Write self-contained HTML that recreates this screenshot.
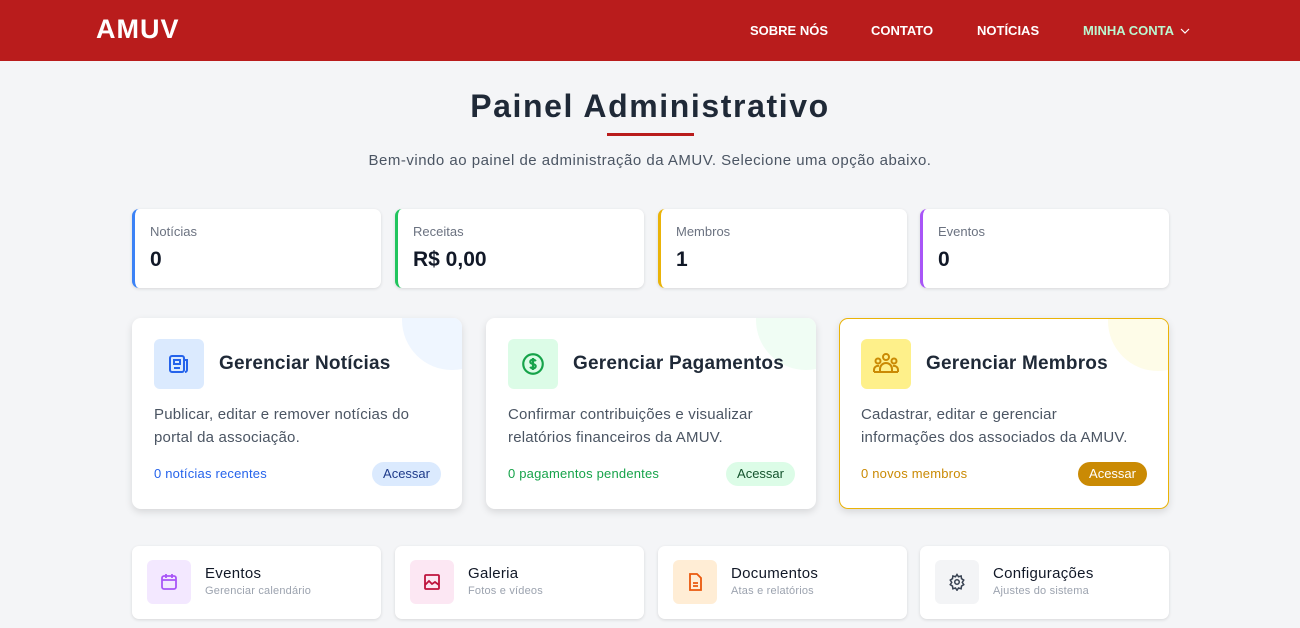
<!DOCTYPE html>
<html><head><meta charset="utf-8"><style>
*{box-sizing:border-box;margin:0;padding:0}
body{width:1300px;height:628px;overflow:hidden;background:#f4f5f7;font-family:"Liberation Sans",sans-serif;color:#1f2937;position:relative}
.hdr{position:absolute;left:0;top:0;width:1300px;height:61px;background:#b91c1c}
.logo{position:absolute;left:96px;top:14px;font-size:27px;font-weight:bold;color:#fff;letter-spacing:1px}
.nav{position:absolute;top:23px;font-size:13px;font-weight:bold;color:#fff}
h1{position:absolute;top:88px;left:0;width:1300px;text-align:center;font-size:32px;font-weight:bold;color:#1f2937;letter-spacing:1.6px}
.ul{position:absolute;left:607px;top:133px;width:87px;height:3px;background:#b91c1c}
.sub{position:absolute;top:152px;width:1300px;text-align:center;font-size:15px;color:#4b5563;letter-spacing:0.5px}
.stat{position:absolute;top:209px;width:249px;height:79px;background:#fff;border-radius:7px;box-shadow:0 1px 3px rgba(0,0,0,.12);border-left:3px solid}
.stat .l{position:absolute;left:15px;top:15px;font-size:13px;color:#6b7280}
.stat .v{position:absolute;left:15px;top:39px;font-size:21px;font-weight:bold;color:#111827}
.card{position:absolute;top:318px;width:330px;height:191px;background:#fff;border-radius:9px;box-shadow:0 3px 8px rgba(0,0,0,.12);overflow:hidden}
.card .c{position:absolute;right:-40px;top:-48px;width:100px;height:100px;border-radius:50%}
.card .ic{position:absolute;left:22px;top:21px;width:50px;height:50px;border-radius:6px;display:flex;align-items:center;justify-content:center}
.card .t{position:absolute;left:87px;top:35px;font-size:19px;font-weight:bold;color:#1f2937;letter-spacing:0.2px}
.card .d{position:absolute;left:22px;top:85px;width:278px;font-size:15px;line-height:23px;color:#4b5563;letter-spacing:0.2px}
.card .f{position:absolute;left:22px;top:148px;font-size:13px;letter-spacing:0.2px}
.card .b{position:absolute;right:21px;top:144px;height:24px;padding:0 11px;border-radius:12px;font-size:13px;line-height:24px}
.sm{position:absolute;top:546px;width:249px;height:73px;background:#fff;border-radius:7px;box-shadow:0 1px 3px rgba(0,0,0,.12)}
.sm .ic{position:absolute;left:15px;top:14px;width:44px;height:44px;border-radius:6px;display:flex;align-items:center;justify-content:center}
.sm .t{position:absolute;left:73px;top:19px;font-size:15px;color:#111827;letter-spacing:0.3px}
.sm .s{position:absolute;left:73px;top:39px;font-size:11px;color:#9ca3af;letter-spacing:0.2px}
</style></head><body>
<div class="hdr">
<div class="logo">AMUV</div>
<div class="nav" style="left:750px">SOBRE NÓS</div>
<div class="nav" style="left:871px">CONTATO</div>
<div class="nav" style="left:977px">NOTÍCIAS</div>
<div class="nav" style="left:1083px;color:#bbf7d0">MINHA CONTA <svg width="10" height="8" viewBox="0 0 10 8" style="margin-left:3px"><path d="M1 2l4 4 4-4" stroke="#fff" fill="none" stroke-width="1.2"/></svg></div>
</div>
<h1>Painel Administrativo</h1>
<div class="ul"></div>
<div class="sub">Bem-vindo ao painel de administração da AMUV. Selecione uma opção abaixo.</div>

<div class="stat" style="left:132px;border-color:#3b82f6"><div class="l">Notícias</div><div class="v">0</div></div>
<div class="stat" style="left:395px;border-color:#22c55e"><div class="l">Receitas</div><div class="v">R$ 0,00</div></div>
<div class="stat" style="left:658px;border-color:#eab308"><div class="l">Membros</div><div class="v">1</div></div>
<div class="stat" style="left:920px;border-color:#a855f7"><div class="l">Eventos</div><div class="v">0</div></div>

<div class="card" style="left:132px"><div class="c" style="background:#eff6ff"></div>
<div class="ic" style="background:#dbeafe"><svg width="24" height="24" viewBox="0 0 24 24" fill="none" stroke="#2563eb" stroke-width="2"><rect x="3" y="4" width="14" height="16" rx="2"/><path d="M17 8h3v10a2 2 0 0 1-2 2"/><rect x="7" y="8" width="6" height="4"/><path d="M7 16h6"/></svg></div>
<div class="t">Gerenciar Notícias</div>
<div class="d">Publicar, editar e remover notícias do portal da associação.</div>
<div class="f" style="color:#2563eb">0 notícias recentes</div>
<div class="b" style="background:#dbeafe;color:#1e3a8a">Acessar</div></div>

<div class="card" style="left:486px"><div class="c" style="background:#f0fdf4"></div>
<div class="ic" style="background:#dcfce7"><svg width="26" height="26" viewBox="0 0 24 24" fill="none" stroke="#16a34a" stroke-width="2"><circle cx="12" cy="12" r="9"/><path d="M14.5 9.5c-.5-1-1.5-1.5-2.5-1.5-1.5 0-2.5.8-2.5 2s1 1.6 2.5 2 2.5.8 2.5 2-1 2-2.5 2c-1 0-2-.5-2.5-1.5M12 6.5v11"/></svg></div>
<div class="t">Gerenciar Pagamentos</div>
<div class="d">Confirmar contribuições e visualizar relatórios financeiros da AMUV.</div>
<div class="f" style="color:#16a34a">0 pagamentos pendentes</div>
<div class="b" style="background:#dcfce7;color:#14532d">Acessar</div></div>

<div class="card" style="left:839px;border:1px solid #eab308"><div class="c" style="background:#fefce8"></div>
<div class="ic" style="background:#fef08a;left:21px;top:20px"><svg width="28" height="26" viewBox="0 0 28 26" fill="none" stroke="#ca8a04" stroke-width="2"><circle cx="14" cy="6" r="3"/><circle cx="6" cy="10" r="2.5"/><circle cx="22" cy="10" r="2.5"/><path d="M8 21v-3a6 6 0 0 1 12 0v3zM2 21v-2a4 4 0 0 1 5-4M26 21v-2a4 4 0 0 0-5-4M2 21h24"/></svg></div>
<div class="t" style="left:86px;top:34px">Gerenciar Membros</div>
<div class="d" style="left:21px;top:84px">Cadastrar, editar e gerenciar informações dos associados da AMUV.</div>
<div class="f" style="color:#ca8a04;left:21px;top:147px">0 novos membros</div>
<div class="b" style="background:#ca8a04;color:#fff;right:21px;top:143px">Acessar</div></div>

<div class="sm" style="left:132px"><div class="ic" style="background:#f3e8ff"><svg width="18" height="18" viewBox="0 0 18 18" fill="none" stroke="#a855f7" stroke-width="1.8"><rect x="2" y="3" width="14" height="13" rx="2"/><path d="M6 1v4M12 1v4M2 7h14"/></svg></div><div class="t">Eventos</div><div class="s">Gerenciar calendário</div></div>
<div class="sm" style="left:395px"><div class="ic" style="background:#fce7f3"><svg width="18" height="18" viewBox="0 0 18 18" fill="none" stroke="#be123c" stroke-width="1.8"><rect x="2" y="2" width="14" height="14" rx="1"/><path d="M2 12l4-4 3 3 3-2 4 3"/></svg></div><div class="t">Galeria</div><div class="s">Fotos e vídeos</div></div>
<div class="sm" style="left:658px"><div class="ic" style="background:#ffedd5"><svg width="18" height="18" viewBox="0 0 18 18" fill="none" stroke="#ea580c" stroke-width="1.8"><path d="M4 1h7l4 4v12H4z"/><path d="M7 10h5M7 13h5"/></svg></div><div class="t">Documentos</div><div class="s">Atas e relatórios</div></div>
<div class="sm" style="left:920px"><div class="ic" style="background:#f3f4f6"><svg width="18" height="18" viewBox="0 0 24 24" fill="none" stroke="#374151" stroke-width="2"><circle cx="12" cy="12" r="3"/><path d="M12 2l2 3 3.5-1 .5 3.5 3 2-2 3 2 3-3 2-.5 3.5-3.5-1-2 3-2-3-3.5 1-.5-3.5-3-2 2-3-2-3 3-2 .5-3.5 3.5 1z"/></svg></div><div class="t">Configurações</div><div class="s">Ajustes do sistema</div></div>
</body></html>
